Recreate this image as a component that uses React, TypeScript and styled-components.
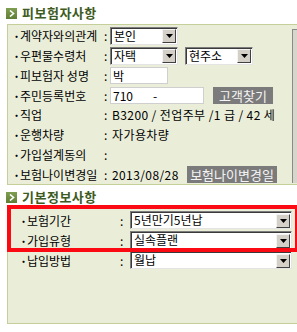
import React from 'react';
import styled, { createGlobalStyle } from 'styled-components';

const GlobalStyle = createGlobalStyle`
  html, body {
    margin: 0;
    padding: 0;
    background: #ffffff;
    overflow: hidden;
  }
  body {
    font-family: 'Noto Sans CJK KR', 'Noto Sans', sans-serif;
    font-size: 12px;
    color: #000;
  }
`;

const Page = styled.div`
  width: 297px;
  height: 332px;
  display: flex;
  flex-direction: column;
`;

const TitleBar = styled.div<{ $h: number }>`
  height: ${(p) => p.$h}px;
  padding-left: 6px;
  display: flex;
  align-items: center;
  gap: 5px;
  font-size: 13px;
  font-weight: bold;
  color: #3d5b22;
  letter-spacing: 0.5px;
`;

const TitleIcon = styled.span`
  width: 11px;
  height: 11px;
  background: linear-gradient(#7f9e52, #5f7f36);
  display: flex;
  align-items: center;
  justify-content: center;
  margin-top: 2px;
`;

const Panel = styled.div<{ $h: number }>`
  position: relative;
  margin-left: 7px;
  width: 292px;
  height: ${(p) => p.$h}px;
  box-sizing: border-box;
  background: #eaeed9;
  border: 1px solid #c5cf9a;
  display: flex;
`;

const RowList = styled.div<{ $w?: number }>`
  width: ${(p) => (p.$w ? `${p.$w}px` : '100%')};
  display: flex;
  flex-direction: column;
  padding-top: 1px;
`;

const SideStrip = styled.div`
  margin-top: 4px;
  width: 5px;
  height: 153px;
  background: #d8d6cc;
  border-left: 1px solid #8a8a8a;
  border-top: 1px solid #8a8a8a;
`;

const Row = styled.div<{ $indent: number }>`
  height: 20px;
  display: flex;
  align-items: center;
  padding-left: ${(p) => p.$indent}px;
`;

const Label = styled.span<{ $w: number }>`
  width: ${(p) => p.$w}px;
  display: flex;
  align-items: center;
  white-space: nowrap;
  font-size: 12px;
  letter-spacing: 0px;
`;

const Dot = styled.span`
  width: 7px;
  font-weight: bold;
`;

const Colon = styled.span<{ $w: number }>`
  width: ${(p) => p.$w}px;
  font-size: 12px;
`;

const Value = styled.span<{ $w?: number }>`
  padding-left: 2px;
  font-size: 12px;
  white-space: nowrap;
  letter-spacing: 0.4px;
  ${(p) => (p.$w ? `width: ${p.$w}px;` : '')}
`;

const SelectFrame = styled.div<{ $w: number }>`
  width: ${(p) => p.$w}px;
  height: 18px;
  box-sizing: border-box;
  display: flex;
  align-items: center;
  background: #fff;
  border: 1px solid;
  border-color: #7c7c7c #e4e4e4 #e4e4e4 #7c7c7c;
  box-shadow: inset 1px 1px 0 #3a3a3a;
`;

const SelectValue = styled.span`
  flex: 1;
  padding-left: 3px;
  font-size: 12px;
  line-height: 16px;
  white-space: nowrap;
  overflow: hidden;
`;

const ArrowButton = styled.span`
  width: 14px;
  height: 14px;
  margin: 1px 1px 0 0;
  box-sizing: border-box;
  background: #d4d0c8;
  border: 1px solid;
  border-color: #f4f4f4 #404040 #404040 #f4f4f4;
  display: flex;
  align-items: center;
  justify-content: center;
`;

const TextInput = styled.div<{ $w: number }>`
  width: ${(p) => p.$w}px;
  height: 17px;
  box-sizing: border-box;
  background: #fff;
  border: 1px solid #cfcfcf;
  padding: 0 2px;
  display: flex;
  align-items: center;
  font-size: 12px;
`;

const Dash = styled.span`
  margin-left: 20px;
`;

const Gap = styled.span<{ $w: number }>`
  width: ${(p) => p.$w}px;
`;

const GrayButton = styled.span<{ $w: number }>`
  width: ${(p) => p.$w}px;
  height: 17px;
  background: #7b7b7b;
  color: #f4f4f4;
  font-size: 13px;
  display: flex;
  align-items: center;
  justify-content: center;
  white-space: nowrap;
`;

const Highlight = styled.div`
  position: absolute;
  top: -4px;
  left: -1px;
  width: 292px;
  height: 47px;
  box-sizing: border-box;
  border: 4px solid #fb0a14;
  pointer-events: none;
`;

const SelectBox = ({ value, width }: { value: string; width: number }) => (
  <SelectFrame $w={width}>
    <SelectValue>{value}</SelectValue>
    <ArrowButton>
      <svg width="7" height="4" viewBox="0 0 7 4">
        <path d="M0 0h7L3.5 4z" fill="#000" />
      </svg>
    </ArrowButton>
  </SelectFrame>
);

const Title = ({ children, height }: { children: string; height: number }) => (
  <TitleBar $h={height}>
    <TitleIcon>
      <svg width="6" height="7" viewBox="0 0 6 7">
        <path d="M1 0.5L4.5 3.5L1 6.5" stroke="#fff" strokeWidth="1.6" fill="none" />
      </svg>
    </TitleIcon>
    {children}
  </TitleBar>
);

// 피보험자사항 row: label column 91px, colon 6px
const InfoRow = ({ label, children }: { label: string; children?: React.ReactNode }) => (
  <Row $indent={5}>
    <Label $w={91}>
      <Dot>·</Dot>
      {label}
    </Label>
    <Colon $w={6}>:</Colon>
    {children}
  </Row>
);

// 기본정보사항 row: wider label column
const BasicRow = ({ label, value }: { label: string; value: string }) => (
  <Row $indent={12}>
    <Label $w={100}>
      <Dot>·</Dot>
      {label}
    </Label>
    <Colon $w={10}>:</Colon>
    <SelectBox value={value} width={162} />
  </Row>
);

const App = () => {
  return (
    <>
      <GlobalStyle />
      <Page>
        <Title height={24}>피보험자사항</Title>
        <Panel $h={161}>
          <RowList $w={285}>
            <InfoRow label="계약자와의관계">
              <SelectBox value="본인" width={68} />
            </InfoRow>
            <InfoRow label="우편물수령처">
              <SelectBox value="자택" width={68} />
              <Gap $w={7} />
              <SelectBox value="현주소" width={68} />
            </InfoRow>
            <InfoRow label="피보험자 성명">
              <TextInput $w={58}>박</TextInput>
            </InfoRow>
            <InfoRow label="주민등록번호">
              <TextInput $w={94}>
                <span>710</span>
                <Dash>-</Dash>
              </TextInput>
              <Gap $w={9} />
              <GrayButton $w={60}>고객찾기</GrayButton>
            </InfoRow>
            <InfoRow label="직업">
              <Value>B3200 / 전업주부 /1 급 / 42 세</Value>
            </InfoRow>
            <InfoRow label="운행차량">
              <Value>자가용차량</Value>
            </InfoRow>
            <InfoRow label="가입설계동의" />
            <InfoRow label="보험나이변경일">
              <Value $w={75}>2013/08/28</Value>
              <GrayButton $w={90}>보험나이변경일</GrayButton>
            </InfoRow>
          </RowList>
          <SideStrip />
        </Panel>

        <Title height={23}>기본정보사항</Title>
        <Panel $h={116}>
          <RowList>
            <BasicRow label="보험기간" value="5년만기5년납" />
            <BasicRow label="가입유형" value="실속플랜" />
            <BasicRow label="납입방법" value="월납" />
          </RowList>
          <Highlight />
        </Panel>
      </Page>
    </>
  );
};

export default App;
